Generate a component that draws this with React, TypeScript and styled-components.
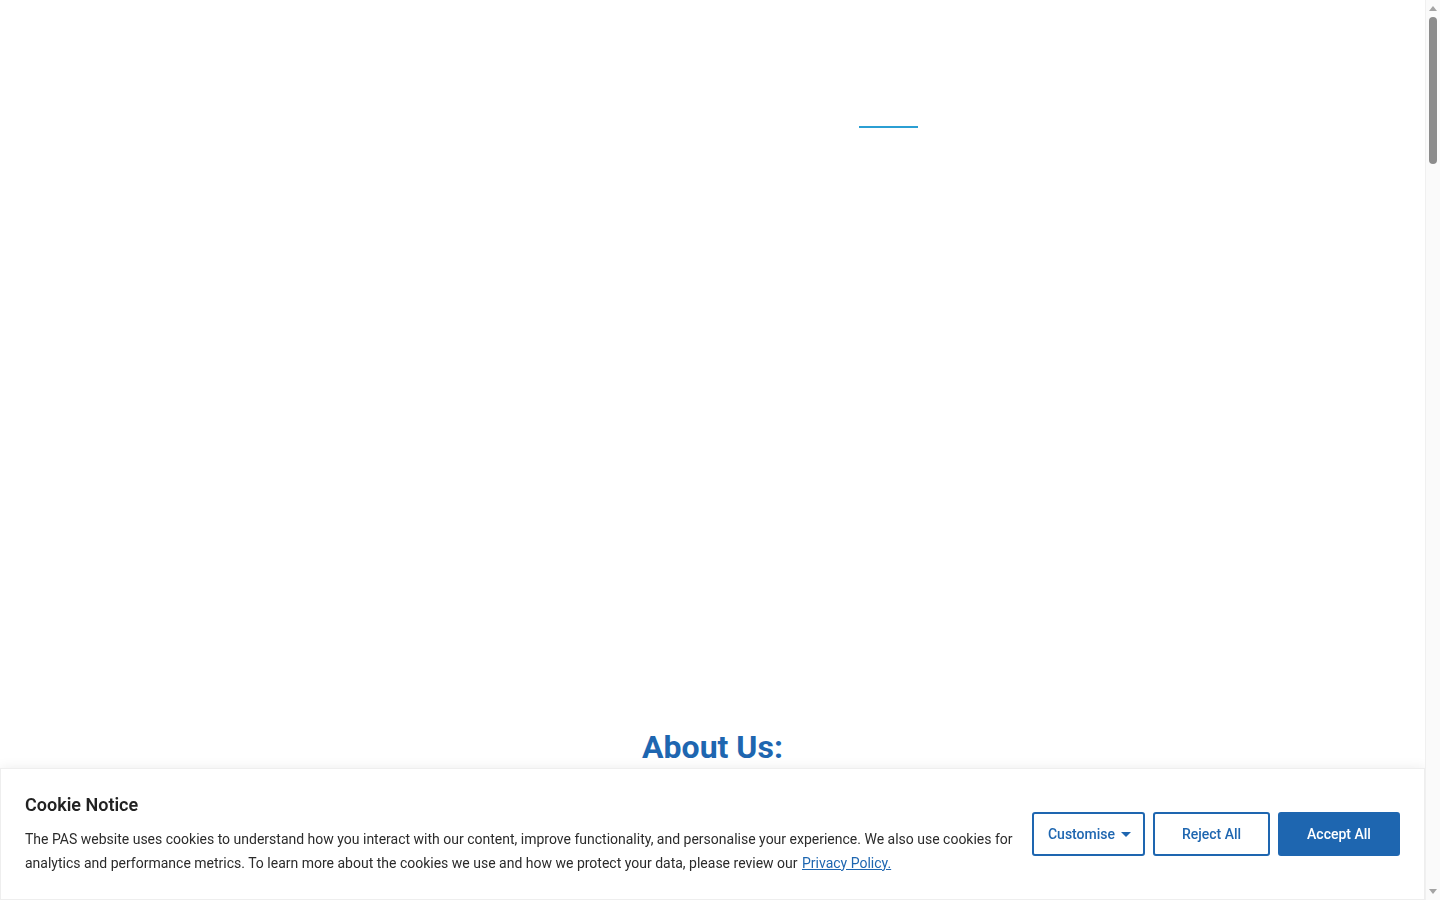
import React from 'react';
import styled, { createGlobalStyle } from 'styled-components';

const GlobalStyle = createGlobalStyle`
  html, body {
    margin: 0;
    padding: 0;
    background: #ffffff;
    font-family: Roboto, "Liberation Sans", Arial, sans-serif;
    color: #222222;
    overflow: hidden;
  }
  * {
    box-sizing: border-box;
  }
`;

const Page = styled.div`
  width: calc(100% - 15px);
  display: flex;
  flex-direction: column;
  min-height: 5300px;
`;

const Header = styled.header`
  height: 129px;
  display: flex;
  align-items: flex-end;
  padding-left: 859px;
`;

const NavIndicator = styled.div`
  width: 59px;
  height: 2px;
  margin-bottom: 1px;
  background-color: #2b9fd3;
`;

const Hero = styled.section`
  height: 599px;
`;

const About = styled.section`
  display: flex;
  flex-direction: column;
  align-items: center;
`;

const AboutTitle = styled.h2`
  margin: 0;
  font-size: 32px;
  line-height: 38px;
  font-weight: 700;
  color: #1e66b0;
`;

const Banner = styled.div`
  position: fixed;
  left: 0;
  right: 15px;
  bottom: 0;
  height: 132px;
  background: #ffffff;
  border: 1px solid #eeeeee;
  box-shadow: 0 0 12px rgba(0, 0, 0, 0.08);
  display: flex;
  align-items: center;
  justify-content: space-between;
  gap: 18px;
  padding: 0 24px;
`;

const BannerText = styled.div`
  display: flex;
  flex-direction: column;
  gap: 11px;
`;

const BannerTitle = styled.h3`
  margin: 0;
  font-size: 18px;
  line-height: 22px;
  font-weight: 600;
  color: #222222;
`;

const BannerBody = styled.p`
  margin: 0;
  font-size: 14px;
  line-height: 24px;
  color: #2b2b2b;
`;

const PolicyLink = styled.a`
  color: #1e66b0;
  text-decoration: underline;
  margin-left: 1px;
`;

const Actions = styled.div`
  display: flex;
  gap: 8px;
  flex-shrink: 0;
`;

const Button = styled.button<{ $primary?: boolean; $w: number; $menu?: boolean }>`
  width: ${({ $w }) => $w}px;
  height: 44px;
  border-radius: 3px;
  border: 2px solid #1e66b0;
  background: ${({ $primary }) => ($primary ? '#1e66b0' : '#ffffff')};
  color: ${({ $primary }) => ($primary ? '#ffffff' : '#1e66b0')};
  font-family: Roboto, "Liberation Sans", Arial, sans-serif;
  font-size: 14px;
  font-weight: 500;
  display: flex;
  align-items: center;
  justify-content: center;
  gap: 6px;
  padding: ${({ $menu }) => ($menu ? '0 0 0 2px' : '0')};
  cursor: pointer;
`;

const Caret = styled.span`
  width: 0;
  height: 0;
  border-left: 5px solid transparent;
  border-right: 5px solid transparent;
  border-top: 5px solid #1e66b0;
  margin-top: 1px;
`;

const ScrollTrack = styled.div`
  position: fixed;
  top: 0;
  right: 0;
  bottom: 0;
  width: 15px;
  background: #fafafa;
  border-left: 1px solid #f0f0f0;
  display: flex;
  flex-direction: column;
  align-items: center;
  justify-content: space-between;
  padding: 6px 0;
`;

const Arrow = styled.span<{ $down?: boolean }>`
  width: 0;
  height: 0;
  border-left: 4px solid transparent;
  border-right: 4px solid transparent;
  ${({ $down }) => ($down ? 'border-top: 5px solid #a3a3a3;' : 'border-bottom: 5px solid #a3a3a3;')}
`;

const ThumbArea = styled.div`
  flex: 1;
  width: 100%;
  display: flex;
  justify-content: center;
  padding: 6px 0 0;
`;

const Thumb = styled.div`
  width: 8px;
  height: 147px;
  border-radius: 4px;
  background: #8c8c8c;
`;

export default function App() {
  return (
    <>
      <GlobalStyle />
      <Page>
        <Header>
          <NavIndicator />
        </Header>
        <Hero />
        <About>
          <AboutTitle>About Us:</AboutTitle>
        </About>
      </Page>
      <Banner>
        <BannerText>
          <BannerTitle>Cookie Notice</BannerTitle>
          <BannerBody>
            The PAS website uses cookies to understand how you interact with our content, improve functionality, and
            personalise your experience. We also use cookies for analytics and performance metrics. To learn more about
            the cookies we use and how we protect your data, please review our{' '}
            <PolicyLink href="#">Privacy Policy.</PolicyLink>
          </BannerBody>
        </BannerText>
        <Actions>
          <Button $w={113} $menu>
            Customise <Caret />
          </Button>
          <Button $w={117}>Reject All</Button>
          <Button $w={122} $primary>
            Accept All
          </Button>
        </Actions>
      </Banner>
      <ScrollTrack>
        <Arrow />
        <ThumbArea>
          <Thumb />
        </ThumbArea>
        <Arrow $down />
      </ScrollTrack>
    </>
  );
}
